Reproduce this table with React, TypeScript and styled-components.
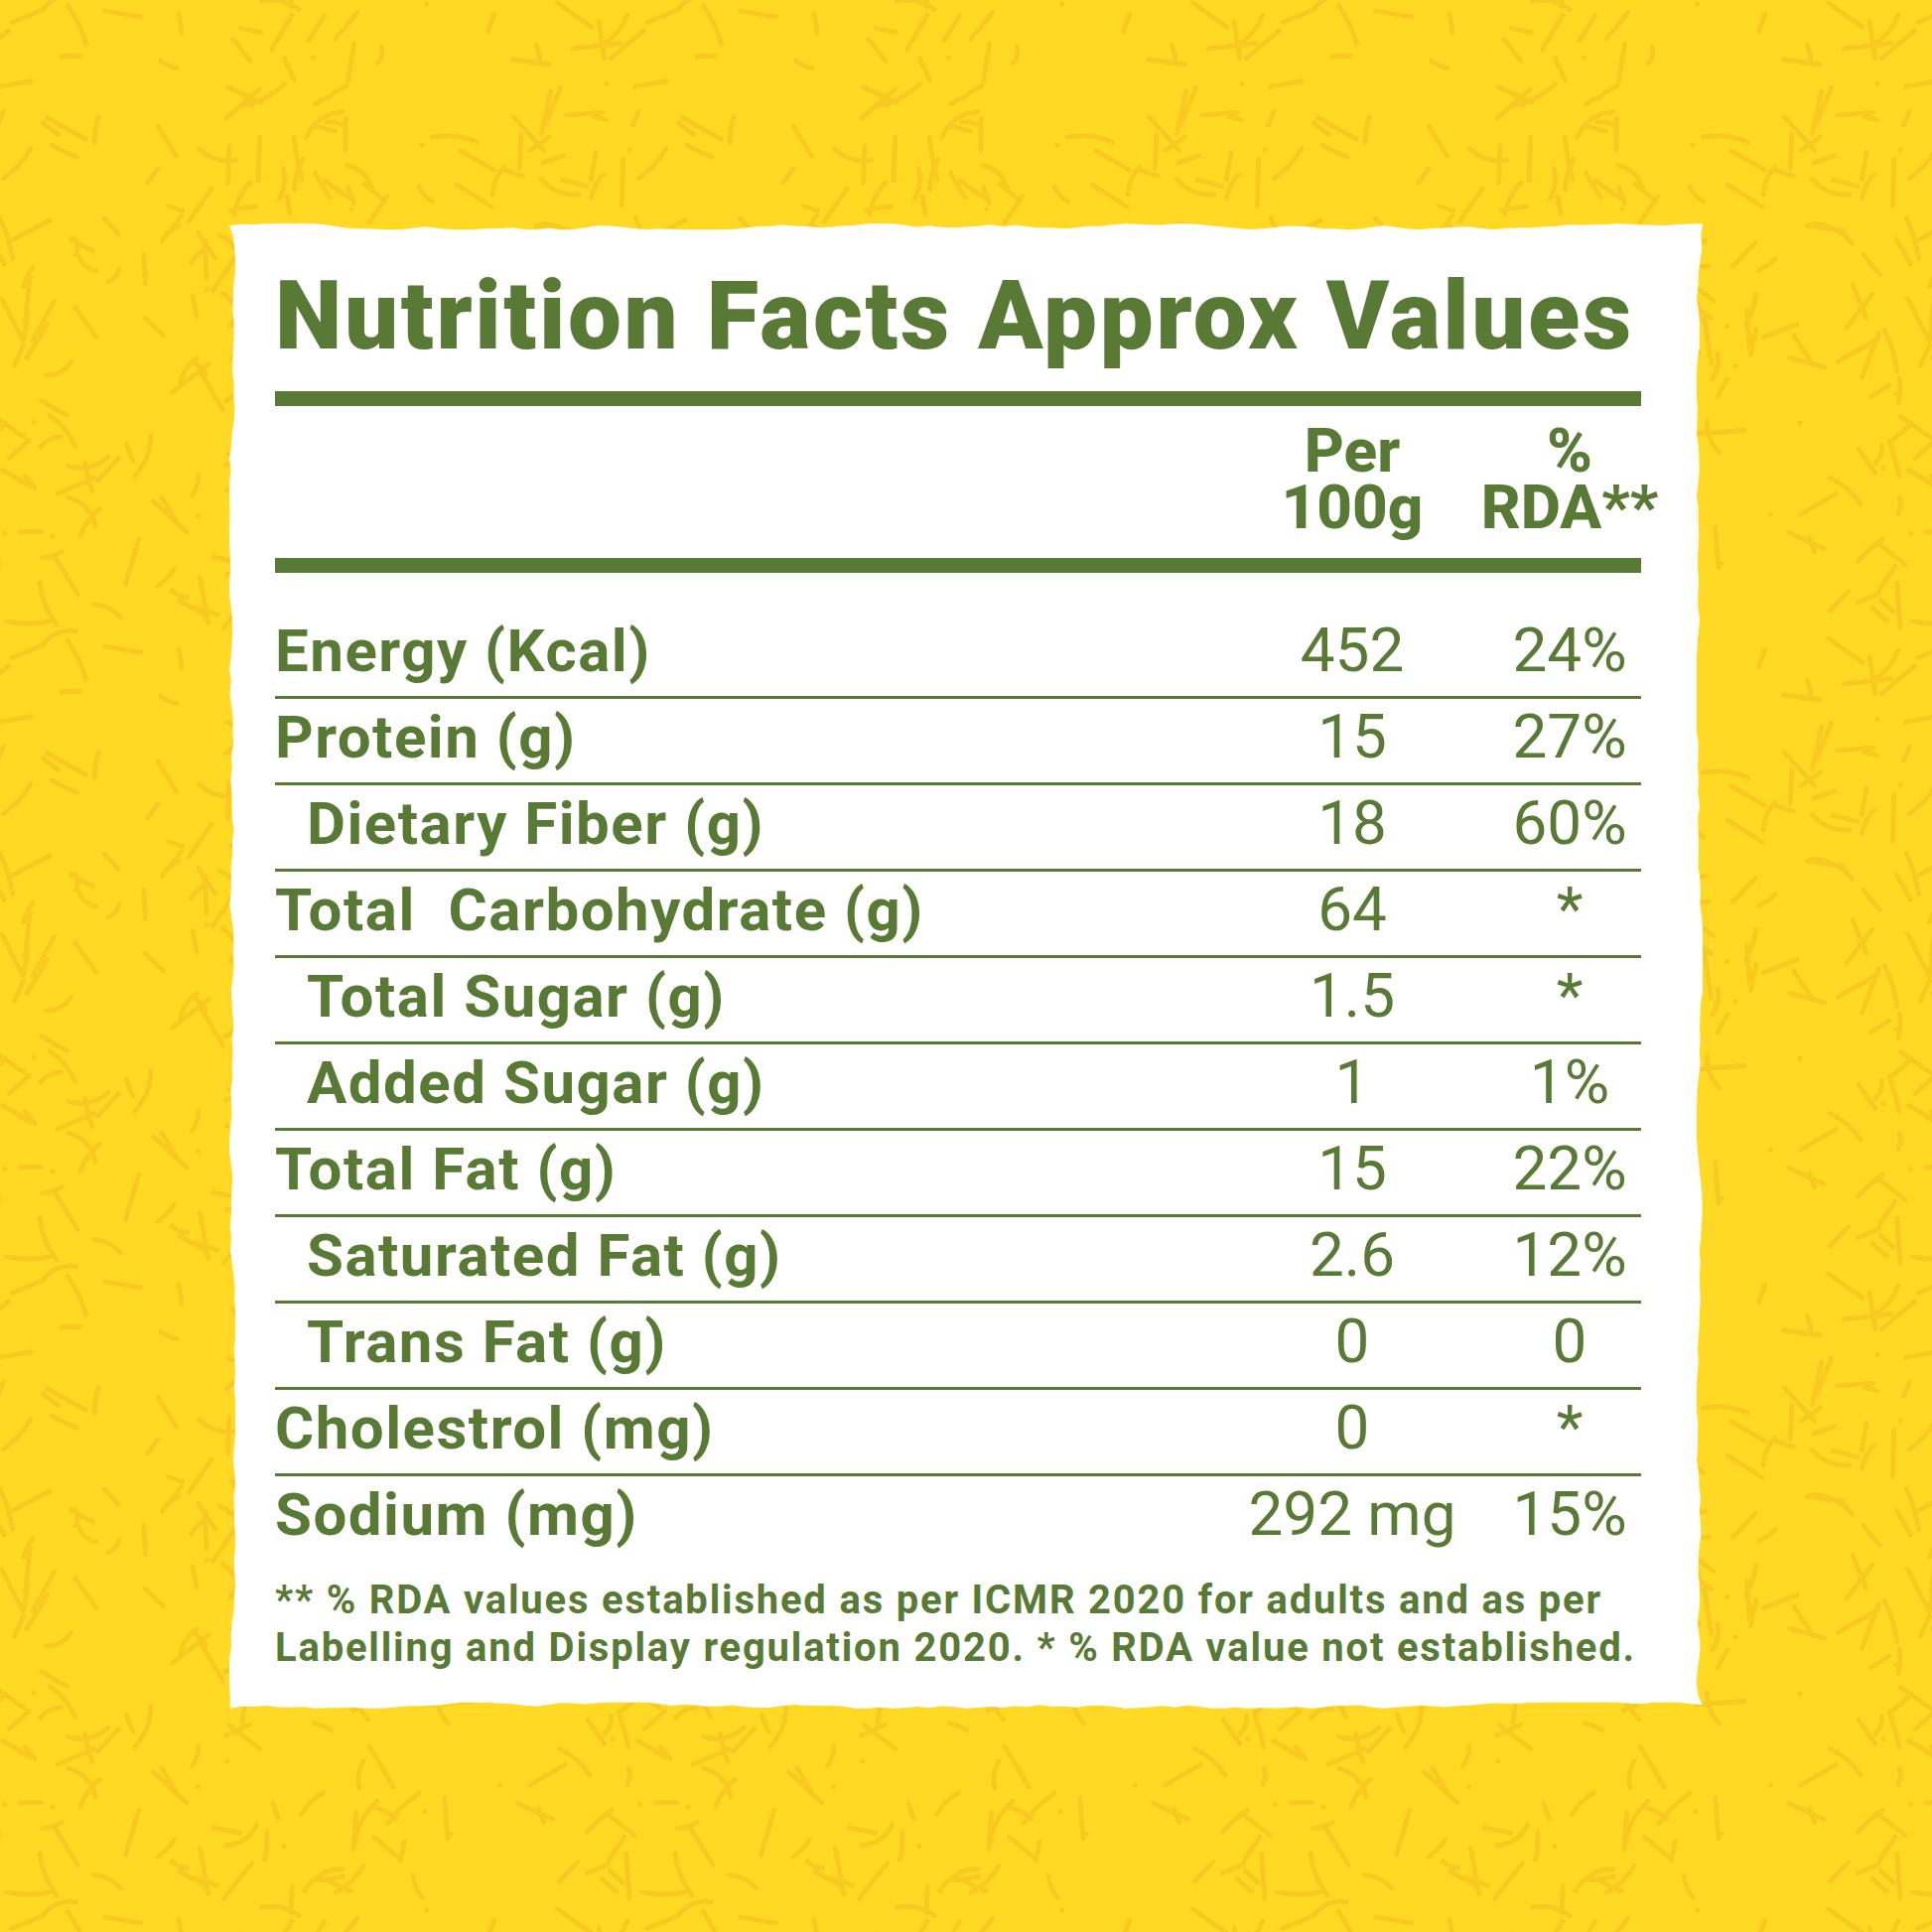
import React from "react";
import styled, { createGlobalStyle } from "styled-components";

const GREEN = "#587a35";
const YELLOW = "#ffd923";
const STROKE = "#f8c91e";

function rng(seed: number) {
  let s = seed >>> 0;
  return () => {
    s = (Math.imul(s, 1664525) + 1013904223) >>> 0;
    return s / 4294967296;
  };
}

function makeTexture(): string {
  const T = 640;
  const r = rng(11);
  let d = "";
  for (let i = 0; i < 240; i++) {
    const x = r() * T;
    const y = r() * T;
    const a = r() * Math.PI * 2;
    const len = 14 + r() * 34;
    const dx = (Math.cos(a) * len) / 2;
    const dy = (Math.sin(a) * len) / 2;
    const bend = r() < 0.45 ? (r() - 0.5) * len * 0.6 : 0;
    const cx = x - Math.sin(a) * bend;
    const cy = y + Math.cos(a) * bend;
    d += `M${(x - dx).toFixed(1)} ${(y - dy).toFixed(1)}Q${cx.toFixed(1)} ${cy.toFixed(1)} ${(x + dx).toFixed(1)} ${(y + dy).toFixed(1)}`;
  }
  for (let i = 0; i < 30; i++) {
    const x = r() * T;
    const y = r() * T;
    d += `M${x.toFixed(1)} ${y.toFixed(1)}l0.1 0`;
  }
  const offs = [-T, 0, T];
  let uses = "";
  offs.forEach((ox) =>
    offs.forEach((oy) => {
      uses += `<use href="#s" x="${ox}" y="${oy}"/>`;
    })
  );
  const svg = `<svg xmlns="http://www.w3.org/2000/svg" width="${T}" height="${T}" viewBox="0 0 ${T} ${T}"><defs><path id="s" d="${d}" fill="none" stroke="${STROKE}" stroke-width="5" stroke-linecap="round"/></defs>${uses}</svg>`;
  return `data:image/svg+xml,${encodeURIComponent(svg)}`;
}

function makeTorn(): string {
  const r = rng(42);
  const N = 120;
  let v = 3;
  const j = () => {
    v = Math.max(0, Math.min(6, v + (r() - 0.5) * 4));
    return v.toFixed(1);
  };
  const pts: string[] = [];
  for (let i = 0; i < N; i++) pts.push(`${((i / N) * 100).toFixed(3)}% ${j()}px`);
  for (let i = 0; i < N; i++) pts.push(`calc(100% - ${j()}px) ${((i / N) * 100).toFixed(3)}%`);
  for (let i = 0; i < N; i++) pts.push(`${(100 - (i / N) * 100).toFixed(3)}% calc(100% - ${j()}px)`);
  for (let i = 0; i < N; i++) pts.push(`${j()}px ${(100 - (i / N) * 100).toFixed(3)}%`);
  return `polygon(${pts.join(",")})`;
}

const TEXTURE = makeTexture();
const TORN = makeTorn();

const GlobalStyle = createGlobalStyle`
  html, body { margin: 0; padding: 0; }
  body { font-family: Roboto, "Liberation Sans", sans-serif; }
`;

const Page = styled.div`
  width: 1946px;
  height: 1946px;
  display: flex;
  align-items: center;
  justify-content: center;
  background-color: ${YELLOW};
  background-image: url("${TEXTURE}");
  background-size: 640px 640px;
`;

const Card = styled.div`
  width: 1484px;
  box-sizing: border-box;
  padding: 43px 62px 36.5px 46px;
  background: #ffffff;
  clip-path: ${TORN};
  color: ${GREEN};
  font-family: Roboto, "Liberation Sans", sans-serif;
`;

const Title = styled.h1`
  margin: 0 0 26px 0;
  font-size: 96px;
  line-height: 100px;
  font-weight: 900;
  letter-spacing: 2.6px;
  white-space: nowrap;
`;

const ThickRule = styled.div`
  height: 15px;
  background: ${GREEN};
`;

const Columns = styled.div`
  display: grid;
  grid-template-columns: 1fr 200px 144px;
  column-gap: 47px;
`;

const HeadRow = styled(Columns)`
  padding: 16px 0 23px 0;
`;

const HeadCell = styled.div`
  display: flex;
  flex-direction: column;
  align-items: center;
  font-size: 62px;
  line-height: 57px;
  font-weight: 800;
  white-space: nowrap;
`;

const Body = styled.div`
  padding-top: 39.5px;
`;

const Row = styled(Columns)<{ $last?: boolean }>`
  align-items: baseline;
  padding-bottom: ${(p) => (p.$last ? "0" : "6px")};
  border-bottom: ${(p) => (p.$last ? "none" : `3px solid ${GREEN}`)};
`;

const Label = styled.div<{ $indent?: boolean }>`
  padding-left: ${(p) => (p.$indent ? "32px" : "0")};
  font-size: 60px;
  line-height: 78px;
  font-weight: 700;
  letter-spacing: 1.5px;
  white-space: pre;
`;

const Value = styled.div`
  display: flex;
  justify-content: center;
  font-size: 62px;
  line-height: 70px;
  font-weight: 400;
  white-space: nowrap;
`;

const Footnote = styled.p`
  margin: 23.5px 0 0 0;
  font-size: 40px;
  line-height: 48px;
  font-weight: 700;
  letter-spacing: 1.8px;
  white-space: nowrap;
`;

const rows: { label: string; per: string; rda: string; indent?: boolean }[] = [
  { label: "Energy (Kcal)", per: "452", rda: "24%" },
  { label: "Protein (g)", per: "15", rda: "27%" },
  { label: "Dietary Fiber (g)", per: "18", rda: "60%", indent: true },
  { label: "Total  Carbohydrate (g)", per: "64", rda: "*" },
  { label: "Total Sugar (g)", per: "1.5", rda: "*", indent: true },
  { label: "Added Sugar (g)", per: "1", rda: "1%", indent: true },
  { label: "Total Fat (g)", per: "15", rda: "22%" },
  { label: "Saturated Fat (g)", per: "2.6", rda: "12%", indent: true },
  { label: "Trans Fat (g)", per: "0", rda: "0", indent: true },
  { label: "Cholestrol (mg)", per: "0", rda: "*" },
  { label: "Sodium (mg)", per: "292 mg", rda: "15%" },
];

export default function App() {
  return (
    <>
      <GlobalStyle />
      <Page>
        <Card>
          <Title>Nutrition Facts Approx Values</Title>
          <ThickRule />
          <HeadRow>
            <span />
            <HeadCell>
              <span>Per</span>
              <span>100g</span>
            </HeadCell>
            <HeadCell>
              <span>%</span>
              <span>RDA**</span>
            </HeadCell>
          </HeadRow>
          <ThickRule />
          <Body>
            {rows.map((r, i) => (
              <Row key={r.label} $last={i === rows.length - 1}>
                <Label $indent={r.indent}>{r.label}</Label>
                <Value>{r.per}</Value>
                <Value>{r.rda}</Value>
              </Row>
            ))}
          </Body>
          <Footnote>
            ** % RDA values established as per ICMR 2020 for adults and as per
            <br />
            Labelling and Display regulation 2020. * % RDA value not established.
          </Footnote>
        </Card>
      </Page>
    </>
  );
}
